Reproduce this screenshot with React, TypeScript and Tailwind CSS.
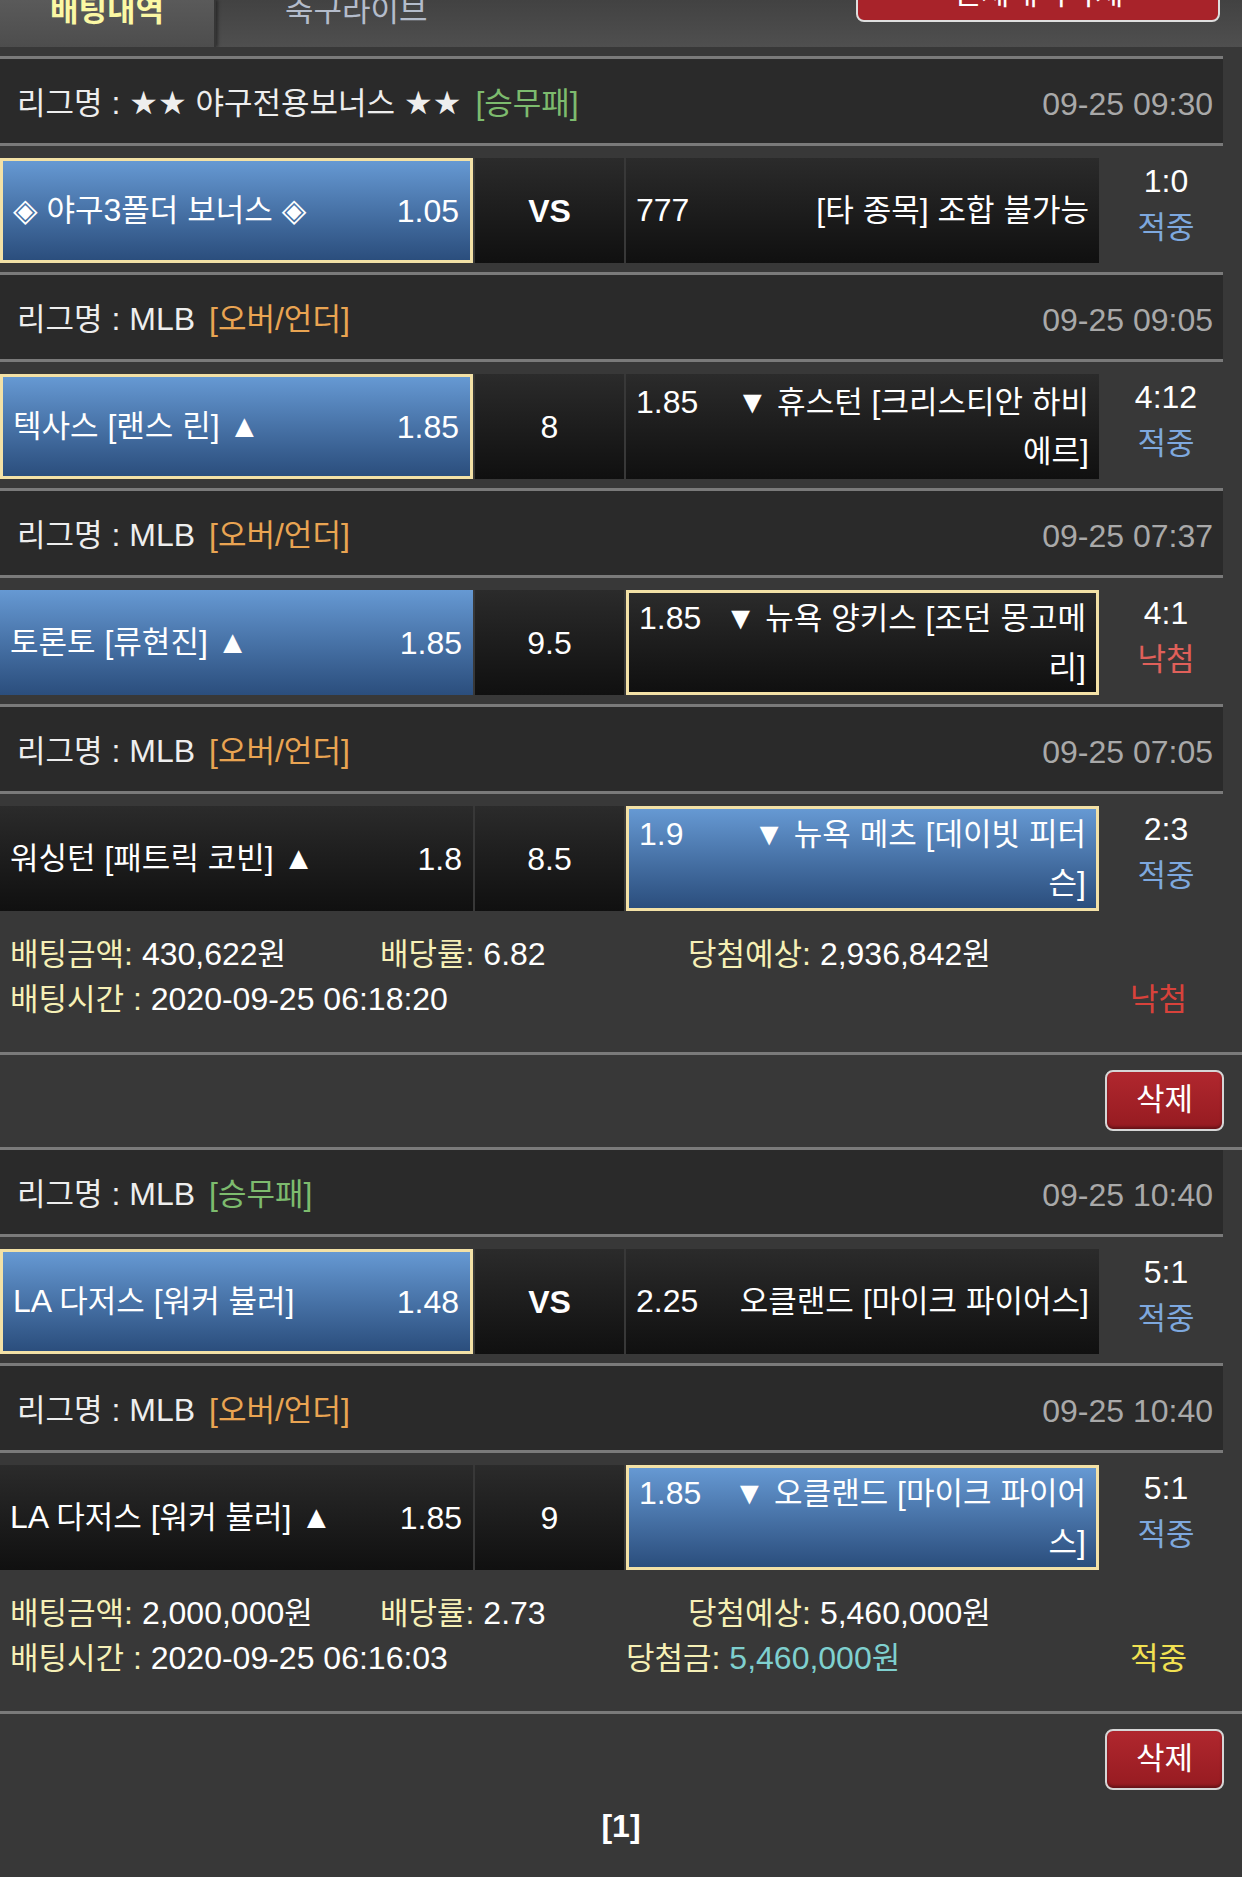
import type { ReactNode } from 'react'

// 한글 구간만 크기 보정 (iOS 폰트 폭에 맞추기 위함)
const HANGUL = /([\uac00-\ud7a3]+)/

function Ko({ s }: { s: string }) {
  const parts = s.split(HANGUL)
  return (
    <>
      {parts.map((p, i) =>
        i % 2 === 1 ? (
          <span key={i} className="text-[31px]">
            {p}
          </span>
        ) : (
          p
        ),
      )}
    </>
  )
}

type Side = {
  name: string
  odds: string
  blue?: boolean
  sel?: boolean
  wrap?: string
}

type Game = {
  league: string
  type: '승무패' | '오버/언더'
  date: string
  home: Side
  mid: string
  away: Side
  score: string
  result: '적중' | '낙첨'
}

function boxClass(s: Side) {
  const bg = s.blue
    ? 'bg-gradient-to-b from-[#6699d3] to-[#2b4e7d]'
    : 'bg-gradient-to-b from-[#2b2b2b] to-[#101010]'
  return `${bg} ${s.sel ? 'border-[3px] border-[#f3e1a6]' : ''}`
}

function LeagueRow({ g, noTop }: { g: Game; noTop?: boolean }) {
  return (
    <div
      className={`w-[1223px] bg-[#2a2a2a] border-[#7a7a7a] border-b-[3px] flex items-center justify-between pt-[5px] pl-[17px] pr-[10px] ${
        noTop ? 'h-[87px]' : 'h-[90px] border-t-[3px]'
      }`}
    >
      <span className="text-[#eeeeee]">
        <Ko s={`리그명 : ${g.league}`} />
        <span className={`ml-[14px] ${g.type === '승무패' ? 'text-[#7dbb6e]' : 'text-[#e9a452]'}`}>
          <Ko s={`[${g.type}]`} />
        </span>
      </span>
      <span className="text-[#a9a9a9]">{g.date}</span>
    </div>
  )
}

function MatchRow({ g }: { g: Game }) {
  return (
    <div className="mt-[12px] mb-[9px] h-[105px] flex">
      <div className={`w-[473px] h-full flex items-center justify-between pl-[10px] pr-[11px] ${boxClass(g.home)}`}>
        <span>
          <Ko s={g.home.name} />
        </span>
        <span>{g.home.odds}</span>
      </div>
      <div className="ml-[2px] w-[149px] h-full flex items-center justify-center bg-gradient-to-b from-[#2b2b2b] to-[#101010]">
        <span className={g.mid === 'VS' ? 'font-bold' : ''}>{g.mid}</span>
      </div>
      <div className={`ml-[2px] w-[473px] h-full flex items-center pl-[10px] pr-[10px] ${boxClass(g.away)}`}>
        <div className="flow-root w-full text-right leading-[48px]">
          <span className="float-left">{g.away.odds}</span>
          <Ko s={g.away.name} />
          {g.away.wrap && (
            <>
              <br />
              <Ko s={g.away.wrap} />
            </>
          )}
        </div>
      </div>
      <div className="w-[124px] pl-[10px] flex flex-col items-center leading-[46px]">
        <span>{g.score}</span>
        <span className={g.result === '적중' ? 'text-[#7ea8de]' : 'text-[#e0605a]'}>
          <Ko s={g.result} />
        </span>
      </div>
    </div>
  )
}

function Label({ children }: { children: string }) {
  return (
    <span className="text-[#f6f0b6]">
      <Ko s={children} />
    </span>
  )
}

function BetInfo({
  amount,
  rate,
  expect,
  time,
  win,
  result,
}: {
  amount: string
  rate: string
  expect: string
  time: string
  win?: string
  result: '적중' | '낙첨'
}) {
  return (
    <div className="pt-[12px] pb-[30px] leading-[45px]">
      <div className="flex pl-[10px]">
        <div className="w-[370px]">
          <Label>배팅금액:</Label> <Ko s={amount} />
        </div>
        <div className="w-[308px]">
          <Label>배당률:</Label> {rate}
        </div>
        <div>
          <Label>당첨예상:</Label> <Ko s={expect} />
        </div>
      </div>
      <div className="flex pl-[10px]">
        <div className="w-[616px]">
          <Label>배팅시간 :</Label> {time}
        </div>
        {win && (
          <div>
            <Label>당첨금:</Label>{' '}
            <span className="text-[#7fd0cf]">
              <Ko s={win} />
            </span>
          </div>
        )}
        <div className={`ml-auto mr-[55px] ${result === '적중' ? 'text-[#f1e152]' : 'text-[#d8423b]'}`}>
          <Ko s={result} />
        </div>
      </div>
    </div>
  )
}

function DeleteArea({ last, children }: { last?: boolean; children?: ReactNode }) {
  return (
    <div className={`border-t-[3px] border-[#7a7a7a] pt-[15px] ${last ? '' : 'pb-[16px] border-b-[3px]'}`}>
      <div className="ml-auto mr-[18px] w-[119px] h-[61px] rounded-[8px] border-2 border-[#d6d6d6] bg-gradient-to-b from-[#b0272e] to-[#961b21] shadow-[inset_0_-2px_3px_rgba(0,0,0,0.35)] flex items-center justify-center">
        <Ko s="삭제" />
      </div>
      {children}
    </div>
  )
}

const BET1: Game[] = [
  {
    league: '★★ 야구전용보너스 ★★',
    type: '승무패',
    date: '09-25 09:30',
    home: { name: '◈ 야구3폴더 보너스 ◈', odds: '1.05', blue: true, sel: true },
    mid: 'VS',
    away: { name: '[타 종목] 조합 불가능', odds: '777' },
    score: '1:0',
    result: '적중',
  },
  {
    league: 'MLB',
    type: '오버/언더',
    date: '09-25 09:05',
    home: { name: '텍사스 [랜스 린] ▲', odds: '1.85', blue: true, sel: true },
    mid: '8',
    away: { name: '▼ 휴스턴 [크리스티안 하비', wrap: '에르]', odds: '1.85' },
    score: '4:12',
    result: '적중',
  },
  {
    league: 'MLB',
    type: '오버/언더',
    date: '09-25 07:37',
    home: { name: '토론토 [류현진] ▲', odds: '1.85', blue: true },
    mid: '9.5',
    away: { name: '▼ 뉴욕 양키스 [조던 몽고메', wrap: '리]', odds: '1.85', sel: true },
    score: '4:1',
    result: '낙첨',
  },
  {
    league: 'MLB',
    type: '오버/언더',
    date: '09-25 07:05',
    home: { name: '워싱턴 [패트릭 코빈] ▲', odds: '1.8' },
    mid: '8.5',
    away: { name: '▼ 뉴욕 메츠 [데이빗 피터', wrap: '슨]', odds: '1.9', blue: true, sel: true },
    score: '2:3',
    result: '적중',
  },
]

const BET2: Game[] = [
  {
    league: 'MLB',
    type: '승무패',
    date: '09-25 10:40',
    home: { name: 'LA 다저스 [워커 뷸러]', odds: '1.48', blue: true, sel: true },
    mid: 'VS',
    away: { name: '오클랜드 [마이크 파이어스]', odds: '2.25' },
    score: '5:1',
    result: '적중',
  },
  {
    league: 'MLB',
    type: '오버/언더',
    date: '09-25 10:40',
    home: { name: 'LA 다저스 [워커 뷸러] ▲', odds: '1.85' },
    mid: '9',
    away: { name: '▼ 오클랜드 [마이크 파이어', wrap: '스]', odds: '1.85', blue: true, sel: true },
    score: '5:1',
    result: '적중',
  },
]

export default function App() {
  return (
    <div className="w-[1242px] min-h-[1877px] bg-[#383838] text-white text-[32px] font-['Liberation_Sans','DejaVu_Sans','Noto_Sans_CJK_KR',sans-serif]">
      {/* 상단 탭 (스크롤되어 윗부분이 잘린 상태) */}
      <div className="h-[47px] overflow-hidden flex bg-gradient-to-b from-[#424242] to-[#4f4f4f]">
        <div className="w-[216px] h-full bg-gradient-to-b from-[#5a5a5a] to-[#4d4d4d] border-r-2 border-[#363636] shadow-[2px_0_3px_rgba(0,0,0,0.4)] flex justify-center">
          <span className="-mt-[7px] leading-[34px] font-bold text-[#fbf8a4]">
            <Ko s="배팅내역" />
          </span>
        </div>
        <div className="ml-[69px] -mt-[7px] leading-[34px] text-[#b4bccb]">
          <Ko s="축구라이브" />
        </div>
        <div className="ml-auto mr-[22px] -mt-[28px] w-[364px] h-[50px] rounded-[8px] border-2 border-[#dedede] bg-[#a8232a] flex justify-center">
          <span className="leading-[38px]">
            <Ko s="전체내역삭제" />
          </span>
        </div>
      </div>

      <div className="pt-[9px]">
        {BET1.map((g, i) => (
          <div key={i}>
            <LeagueRow g={g} />
            <MatchRow g={g} />
          </div>
        ))}
        <BetInfo
          amount="430,622원"
          rate="6.82"
          expect="2,936,842원"
          time="2020-09-25 06:18:20"
          result="낙첨"
        />
        <DeleteArea />

        {BET2.map((g, i) => (
          <div key={i}>
            <LeagueRow g={g} noTop={i === 0} />
            <MatchRow g={g} />
          </div>
        ))}
        <BetInfo
          amount="2,000,000원"
          rate="2.73"
          expect="5,460,000원"
          time="2020-09-25 06:16:03"
          win="5,460,000원"
          result="적중"
        />
        <DeleteArea last>
          <div className="mt-[17px] text-center leading-[38px] font-bold">[1]</div>
        </DeleteArea>
      </div>
    </div>
  )
}
